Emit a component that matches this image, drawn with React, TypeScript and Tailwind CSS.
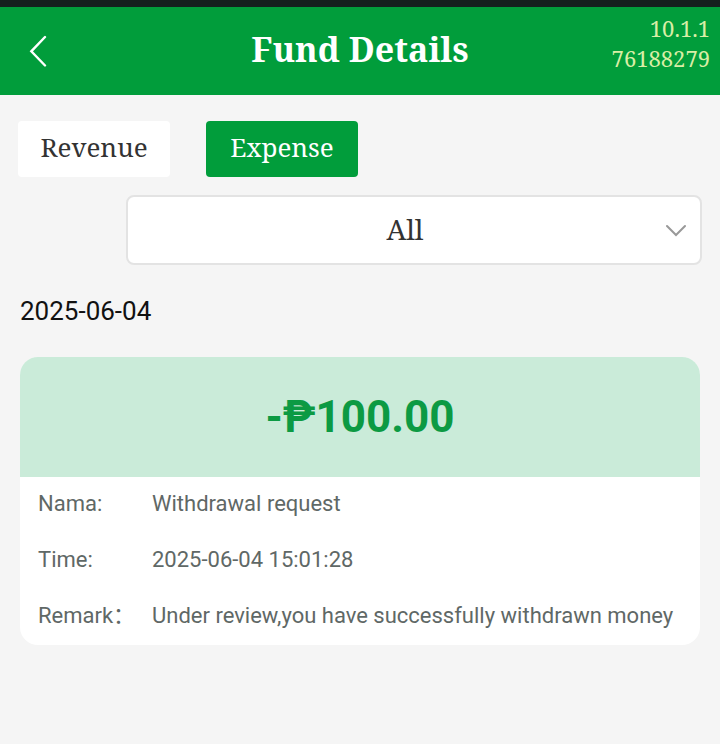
import React, { useState } from 'react';

interface FundRecord {
  id: number;
  date: string;
  amount: string;
  name: string;
  time: string;
  remark: string;
}

const tabs = ['Revenue', 'Expense'];

const records: FundRecord[] = [
  {
    id: 1,
    date: '2025-06-04',
    amount: '-₱100.00',
    name: 'Withdrawal request',
    time: '2025-06-04 15:01:28',
    remark: 'Under review,you have successfully withdrawn money'
  }
];

const Header = () => {
  return (
    <header className="border-t-[7px] border-[#15201e] bg-[#019d3b]">
      <div className="grid grid-cols-[1fr_auto_1fr] h-[88px]">
        <button type="button" aria-label="Back" className="flex items-center justify-self-start pl-7 text-white">
          <svg className="w-5 h-8" viewBox="0 0 20 32" fill="none" stroke="currentColor" strokeWidth="2.4" strokeLinecap="round">
            <path d="M17 2 L3.3 16.3 L17 30.5" />
          </svg>
        </button>
        <h1 className="self-center pb-1 text-[34px] leading-10 font-bold text-white">Fund Details</h1>
        <div className="pt-[6px] pr-[10px] text-right text-[22px] leading-[30px] text-[#d9eea6]">
          <p>10.1.1</p>
          <p>76188279</p>
        </div>
      </div>
    </header>
  );
};

const RecordCard = ({ record }: { record: FundRecord }) => {
  const rows = [
    { label: 'Nama:', value: record.name },
    { label: 'Time:', value: record.time },
    { label: 'Remark：', value: record.remark }
  ];

  return (
    <section className="px-5 pt-7 font-[Roboto,'Noto_Sans_CJK_SC',sans-serif]">
      <h2 className="text-[26px] leading-9 text-[#111111]">{record.date}</h2>
      <div className="mt-7 overflow-hidden rounded-[18px] bg-white">
        <p className="bg-[#caebd9] py-8 text-center text-[44px] leading-14 font-bold text-[#0c9a43]">{record.amount}</p>
        <dl>
          {rows.map((row) => (
            <div key={row.label} className="flex h-14 pt-[11px] pl-[18px] text-[22px] leading-8 text-[#5f6866]">
              <dt className="w-[114px] shrink-0 whitespace-nowrap">{row.label}</dt>
              <dd>{row.value}</dd>
            </div>
          ))}
        </dl>
      </div>
    </section>
  );
};

const App = () => {
  const [activeTab, setActiveTab] = useState('Expense');

  return (
    <div className="min-h-screen bg-[#f5f5f5] font-['Noto_Serif','DejaVu_Serif',serif]">
      <Header />

      <main>
        <div className="flex gap-9 px-[18px] pt-[26px]">
          {tabs.map((tab) => (
            <button
              key={tab}
              type="button"
              onClick={() => setActiveTab(tab)}
              className={`w-[152px] h-14 rounded pb-1 text-[26px] leading-8 ${
                activeTab === tab ? 'bg-[#019d3b] text-white' : 'bg-white text-[#333333]'
              }`}
            >
              {tab}
            </button>
          ))}
        </div>

        <div className="relative mt-[18px] mr-[18px] ml-[126px]">
          <select
            aria-label="Record type"
            className="block w-full h-[70px] appearance-none rounded-lg border-2 border-[#e3e3e3] bg-white pr-[18px] pb-[2px] text-[28px] text-[#333333] [text-align-last:center]"
          >
            <option>All</option>
          </select>
          <svg
            className="pointer-events-none absolute top-7 right-4 w-5 h-4"
            viewBox="0 0 20 16"
            fill="none"
            stroke="#999999"
            strokeWidth="2"
            strokeLinecap="round"
          >
            <path d="M1 3 L10 12 L19 3" />
          </svg>
        </div>

        {records.map((record) => (
          <RecordCard key={record.id} record={record} />
        ))}
      </main>
    </div>
  );
};

export default App;
